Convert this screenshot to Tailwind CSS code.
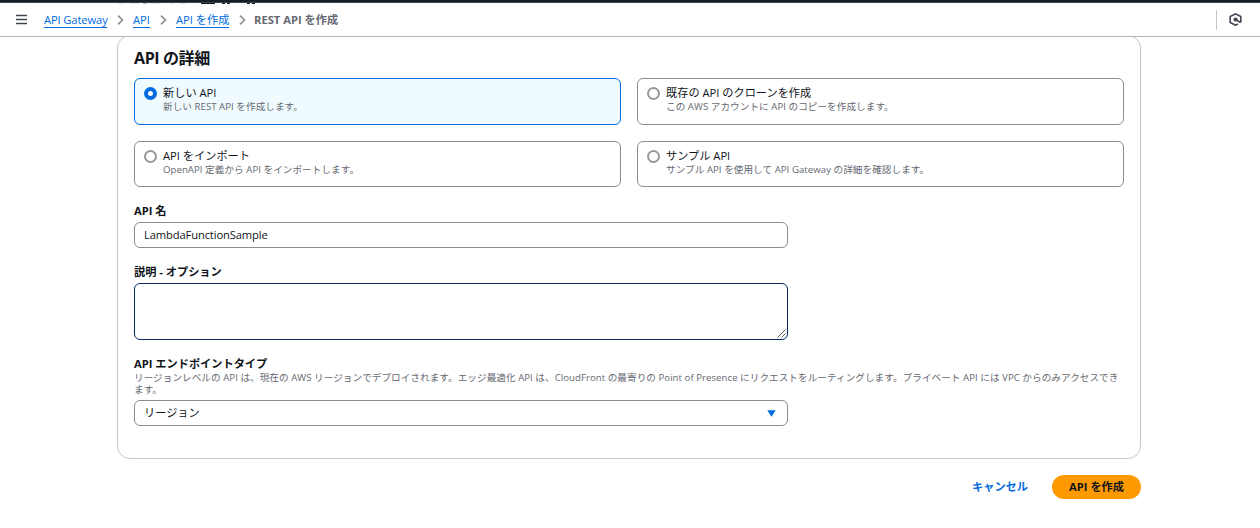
<!DOCTYPE html>
<html lang="ja">
<head>
<meta charset="utf-8">
<title>REST API を作成</title>
<script src="https://cdn.jsdelivr.net/npm/@tailwindcss/browser@4"></script>
</head>
<body class="h-[528px] overflow-hidden bg-white font-['Open_Sans','Noto_Sans_CJK_JP',sans-serif] text-[11.2px] leading-4 text-[#0f141a]">
<header class="relative z-10 flex h-[37px] flex-col border-b border-[#b4b4bb] bg-white">
  <div class="h-[3px] shrink-0 border-b border-[#424650] bg-[#161d26]"></div>
  <!-- page heading scrolled under the bar -->
  <svg class="absolute left-[117px] top-[3px] h-px w-[140px]" viewBox="0 0 140 1" shape-rendering="crispEdges"><path fill="#e3e4e8" d="M1 0h7v1H1zM13 0h9v1h-9zM33 0h11v1H33zM53 0h3v1h-3zM63 0h6v1h-6z"/><path fill="#b4b4bb" d="M26 0h4v1h-4z"/><path fill="#0f141a" d="M84 0h14v1H84zM105 0h3v1h-3zM110 0h3v1h-3zM130 0h3v1h-3zM135 0h3v1h-3z"/></svg>
  <div class="flex flex-1 items-center">
    <svg class="ml-4 mr-[17px] h-[11px] w-[11px]" viewBox="0 0 11 11" fill="none" stroke="#424650" stroke-width="1.6"><path d="M0 1.5h11M0 5.5h11M0 9.5h11"/></svg>
    <nav class="flex items-center whitespace-nowrap text-[#006ce0]">
      <a class="w-[63px] border-b border-[#006ce0] pt-[2px] leading-[14px] tracking-[-0.12px]">API Gateway</a>
      <svg class="mx-[9px] h-[10px] w-2" viewBox="0 0 8 10" fill="none" stroke="#8c8c94" stroke-width="1.6"><path d="M2 .7 6.5 5 2 9.3"/></svg>
      <a class="w-[17px] border-b border-[#006ce0] pt-[2px] leading-[14px]">API</a>
      <svg class="mx-[9px] h-[10px] w-2" viewBox="0 0 8 10" fill="none" stroke="#8c8c94" stroke-width="1.6"><path d="M2 .7 6.5 5 2 9.3"/></svg>
      <a class="w-[53px] border-b border-[#006ce0] pt-[2px] leading-[14px]">API を作成</a>
      <svg class="ml-[9px] mr-2 h-[10px] w-2" viewBox="0 0 8 10" fill="none" stroke="#8c8c94" stroke-width="1.6"><path d="M2 .7 6.5 5 2 9.3"/></svg>
      <span class="font-bold text-[#656871]">REST API を作成</span>
    </nav>
    <div class="ml-auto mr-[18px] flex items-center gap-[12px]">
      <div class="h-5 w-px bg-[#c6c6cd]"></div>
      <svg class="h-[13px] w-[13px]" viewBox="0 0 13 13" fill="none" stroke="#424650" stroke-width="1.6"><path d="M9 11 6.5 12.2 1.2 9.4V3.6L6.5.9l5.3 2.7v5.8M6.5 6.5l5.2 3"/><circle cx="6.5" cy="6.5" r="1.3" fill="#424650"/></svg>
    </div>
  </div>
</header>
<main class="ml-[117px] w-[1024px]">
  <section class="-mt-[2px] h-[424px] rounded-[13px] border border-[#c6c6cd] px-4 pt-[10px]">
    <h2 class="h-[32px] text-[16px] font-bold leading-6 tracking-[-0.4px]">API の詳細</h2>
    <div class="grid grid-cols-[487px_487px] gap-4">
      <label class="flex h-[47px] gap-[6px] rounded-[6px] border border-[#006ce0] bg-[#f0fbff] pl-[9px] pt-[8px]">
        <span class="h-[13px] w-[13px] rounded-full border-4 border-[#006ce0] bg-white"></span>
        <span class="-mt-[2px] block"><span class="block leading-4">新しい API</span><span class="block text-[9.6px] leading-[11px] tracking-[0.06px] text-[#656871]">新しい REST API を作成します。</span></span>
      </label>
      <label class="flex h-[47px] gap-[6px] rounded-[6px] border border-[#8c8c94] pl-[9px] pt-[8px]">
        <span class="h-[13px] w-[13px] rounded-full border-2 border-[#97979f] bg-white"></span>
        <span class="-mt-[2px] block"><span class="block leading-4">既存の API のクローンを作成</span><span class="block text-[9.6px] leading-[11px] tracking-[0.06px] text-[#656871]">この AWS アカウントに API のコピーを作成します。</span></span>
      </label>
      <label class="flex h-[46px] gap-[6px] rounded-[6px] border border-[#8c8c94] pl-[9px] pt-[8px]">
        <span class="h-[13px] w-[13px] rounded-full border-2 border-[#97979f] bg-white"></span>
        <span class="-mt-[2px] block"><span class="block leading-4">API をインポート</span><span class="block text-[9.6px] leading-[11px] tracking-[0.06px] text-[#656871]">OpenAPI 定義から API をインポートします。</span></span>
      </label>
      <label class="flex h-[46px] gap-[6px] rounded-[6px] border border-[#8c8c94] pl-[9px] pt-[8px]">
        <span class="h-[13px] w-[13px] rounded-full border-2 border-[#97979f] bg-white"></span>
        <span class="-mt-[2px] block"><span class="block leading-4">サンプル API</span><span class="block text-[9.6px] leading-[11px] tracking-[0.06px] text-[#656871]">サンプル API を使用して API Gateway の詳細を確認します。</span></span>
      </label>
    </div>
    <div class="mt-4 h-[19px] font-bold">API 名</div>
    <div class="h-[26px] w-[654px] rounded-[6px] border border-[#8c8c94] px-[9px] leading-6 tracking-[-0.13px]">LambdaFunctionSample</div>
    <div class="mt-4 h-[19px] font-bold">説明 - オプション</div>
    <div class="flex h-[57px] w-[654px] items-end justify-end rounded-[6px] border border-[#002b66]">
      <svg class="h-[10px] w-[10px]" viewBox="0 0 10 10" fill="none" stroke="#424650" stroke-width=".9"><path d="M.5 8.5l8-8M4.5 8.5l4-4"/></svg>
    </div>
    <div class="mt-4 h-4 font-bold">API エンドポイントタイプ</div>
    <p class="h-7 whitespace-nowrap text-[9.6px] leading-[12px] tracking-[0.055px] text-[#656871]">リージョンレベルの API は、現在の AWS リージョンでデプロイされます。エッジ最適化 API は、CloudFront の最寄りの Point of Presence にリクエストをルーティングします。プライベート API には VPC からのみアクセスでき<br>ます。</p>
    <div class="flex h-[26px] w-[654px] items-center justify-between rounded-[6px] border border-[#8c8c94] pl-[9px] pr-[11px]">
      <span>リージョン</span>
      <svg class="h-[7px] w-[9px]" viewBox="0 0 9 7" fill="#006ce0"><path d="M.3.2h8.4L4.5 6.8z"/></svg>
    </div>
  </section>
  <div class="mt-4 flex h-6 items-center justify-end gap-6 font-bold">
    <span class="text-[#006ce0]">キャンセル</span>
    <button class="h-6 w-[89px] rounded-full bg-[#ff9900]">API を作成</button>
  </div>
</main>
</body>
</html>
